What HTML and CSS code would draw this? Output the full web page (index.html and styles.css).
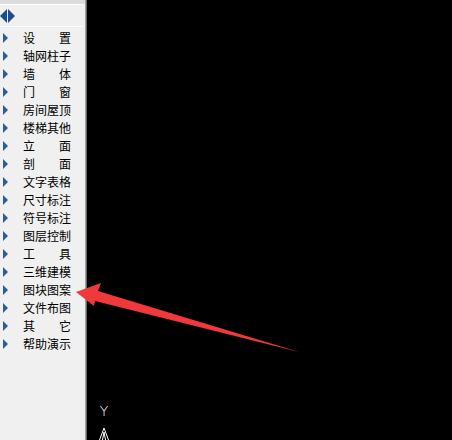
FILE: index.html
```
<!DOCTYPE html>
<html lang="zh-CN">
<head>
    <meta charset="UTF-8">
    <title>屏幕菜单</title>
    <link rel="stylesheet" href="styles.css">
</head>
<body>
    <div class="app">
        <div class="side-menu">
            <div class="menu-top"></div>
            <div class="menu-head">
                <span class="nav-left"></span><span class="nav-right"></span>
            </div>
            <ul class="menu-list">
                <li><span class="tri"></span><span class="label">设置</span></li>
                <li><span class="tri"></span><span class="label">轴网柱子</span></li>
                <li><span class="tri"></span><span class="label">墙体</span></li>
                <li><span class="tri"></span><span class="label">门窗</span></li>
                <li><span class="tri"></span><span class="label">房间屋顶</span></li>
                <li><span class="tri"></span><span class="label">楼梯其他</span></li>
                <li><span class="tri"></span><span class="label">立面</span></li>
                <li><span class="tri"></span><span class="label">剖面</span></li>
                <li><span class="tri"></span><span class="label">文字表格</span></li>
                <li><span class="tri"></span><span class="label">尺寸标注</span></li>
                <li><span class="tri"></span><span class="label">符号标注</span></li>
                <li><span class="tri"></span><span class="label">图层控制</span></li>
                <li><span class="tri"></span><span class="label">工具</span></li>
                <li><span class="tri"></span><span class="label">三维建模</span></li>
                <li><span class="tri"></span><span class="label">图块图案</span></li>
                <li><span class="tri"></span><span class="label">文件布图</span></li>
                <li><span class="tri"></span><span class="label">其它</span></li>
                <li><span class="tri"></span><span class="label">帮助演示</span></li>
            </ul>
        </div>
        <div class="canvas">
            <div class="ucs">
                <span class="ucs-y">Y</span>
                <svg width="14" height="13" viewBox="0 0 14 13">
                    <path d="M2.5 13 L7 1 L11.5 13 M5.5 13 L7 5 L8.5 13" fill="none" stroke="#fff" stroke-width="1"/>
                </svg>
            </div>
        </div>
    </div>

    <!-- pointer annotation -->
    <svg class="pointer" width="452" height="440" viewBox="0 0 452 440">
        <polygon points="76,292 101,283 98,291 299,352 95,301 94,306" fill="#f0393b"/>
    </svg>
</body>
</html>
```

FILE: styles.css
```
body {
    margin: 0;
    width: 452px;
    height: 440px;
    overflow: hidden;
    background-color: #000;
    font-family: "Noto Sans CJK SC", "Liberation Sans", sans-serif;
    position: relative;
}

.app {
    display: flex;
    height: 100%;
}

.side-menu {
    width: 85px;
    flex-shrink: 0;
    background-color: #f0f0f0;
    border-right: 1px solid #a0a0a0;
    box-shadow: 1px 0 0 #696969;
}

.menu-top {
    height: 4px;
    background-color: #dcdcdc;
}

.menu-head {
    height: 23px;
    width: 83px;
    border-top: 1px solid #fff;
    border-bottom: 1px solid #fff;
    display: flex;
    align-items: center;
    padding-top: 1px;
    box-sizing: border-box;
}

.nav-left {
    width: 0;
    height: 0;
    border-top: 7px solid transparent;
    border-bottom: 7px solid transparent;
    border-right: 7px solid #1b4f8c;
}

.nav-right {
    width: 0;
    height: 0;
    margin-left: 1px;
    border-top: 7px solid transparent;
    border-bottom: 7px solid transparent;
    border-left: 7px solid #1b4f8c;
}

.menu-list {
    list-style: none;
    margin: 0;
    padding: 0;
    margin-top: 2px;
}

.menu-list li {
    height: 18px;
    display: flex;
    align-items: center;
}

.tri {
    width: 0;
    height: 0;
    margin-left: 3px;
    border-top: 5px solid transparent;
    border-bottom: 5px solid transparent;
    border-left: 5px solid #2c5d97;
}

.label {
    margin-left: 15px;
    width: 48px;
    font-size: 12px;
    line-height: 18px;
    color: #000;
    text-align: justify;
    text-align-last: justify;
}

.canvas {
    flex: 1;
    margin-left: 2px;
    background-color: #000;
    position: relative;
}

.ucs {
    position: absolute;
    left: 9px;
    bottom: 0;
    display: flex;
    flex-direction: column;
    align-items: center;
    width: 14px;
}

.ucs-y {
    color: #fff;
    font-family: "DejaVu Sans", sans-serif;
    font-weight: 300;
    font-size: 14px;
    line-height: 14px;
    margin-bottom: 9px;
}

.pointer {
    position: absolute;
    left: 0;
    top: 0;
    pointer-events: none;
}
```
